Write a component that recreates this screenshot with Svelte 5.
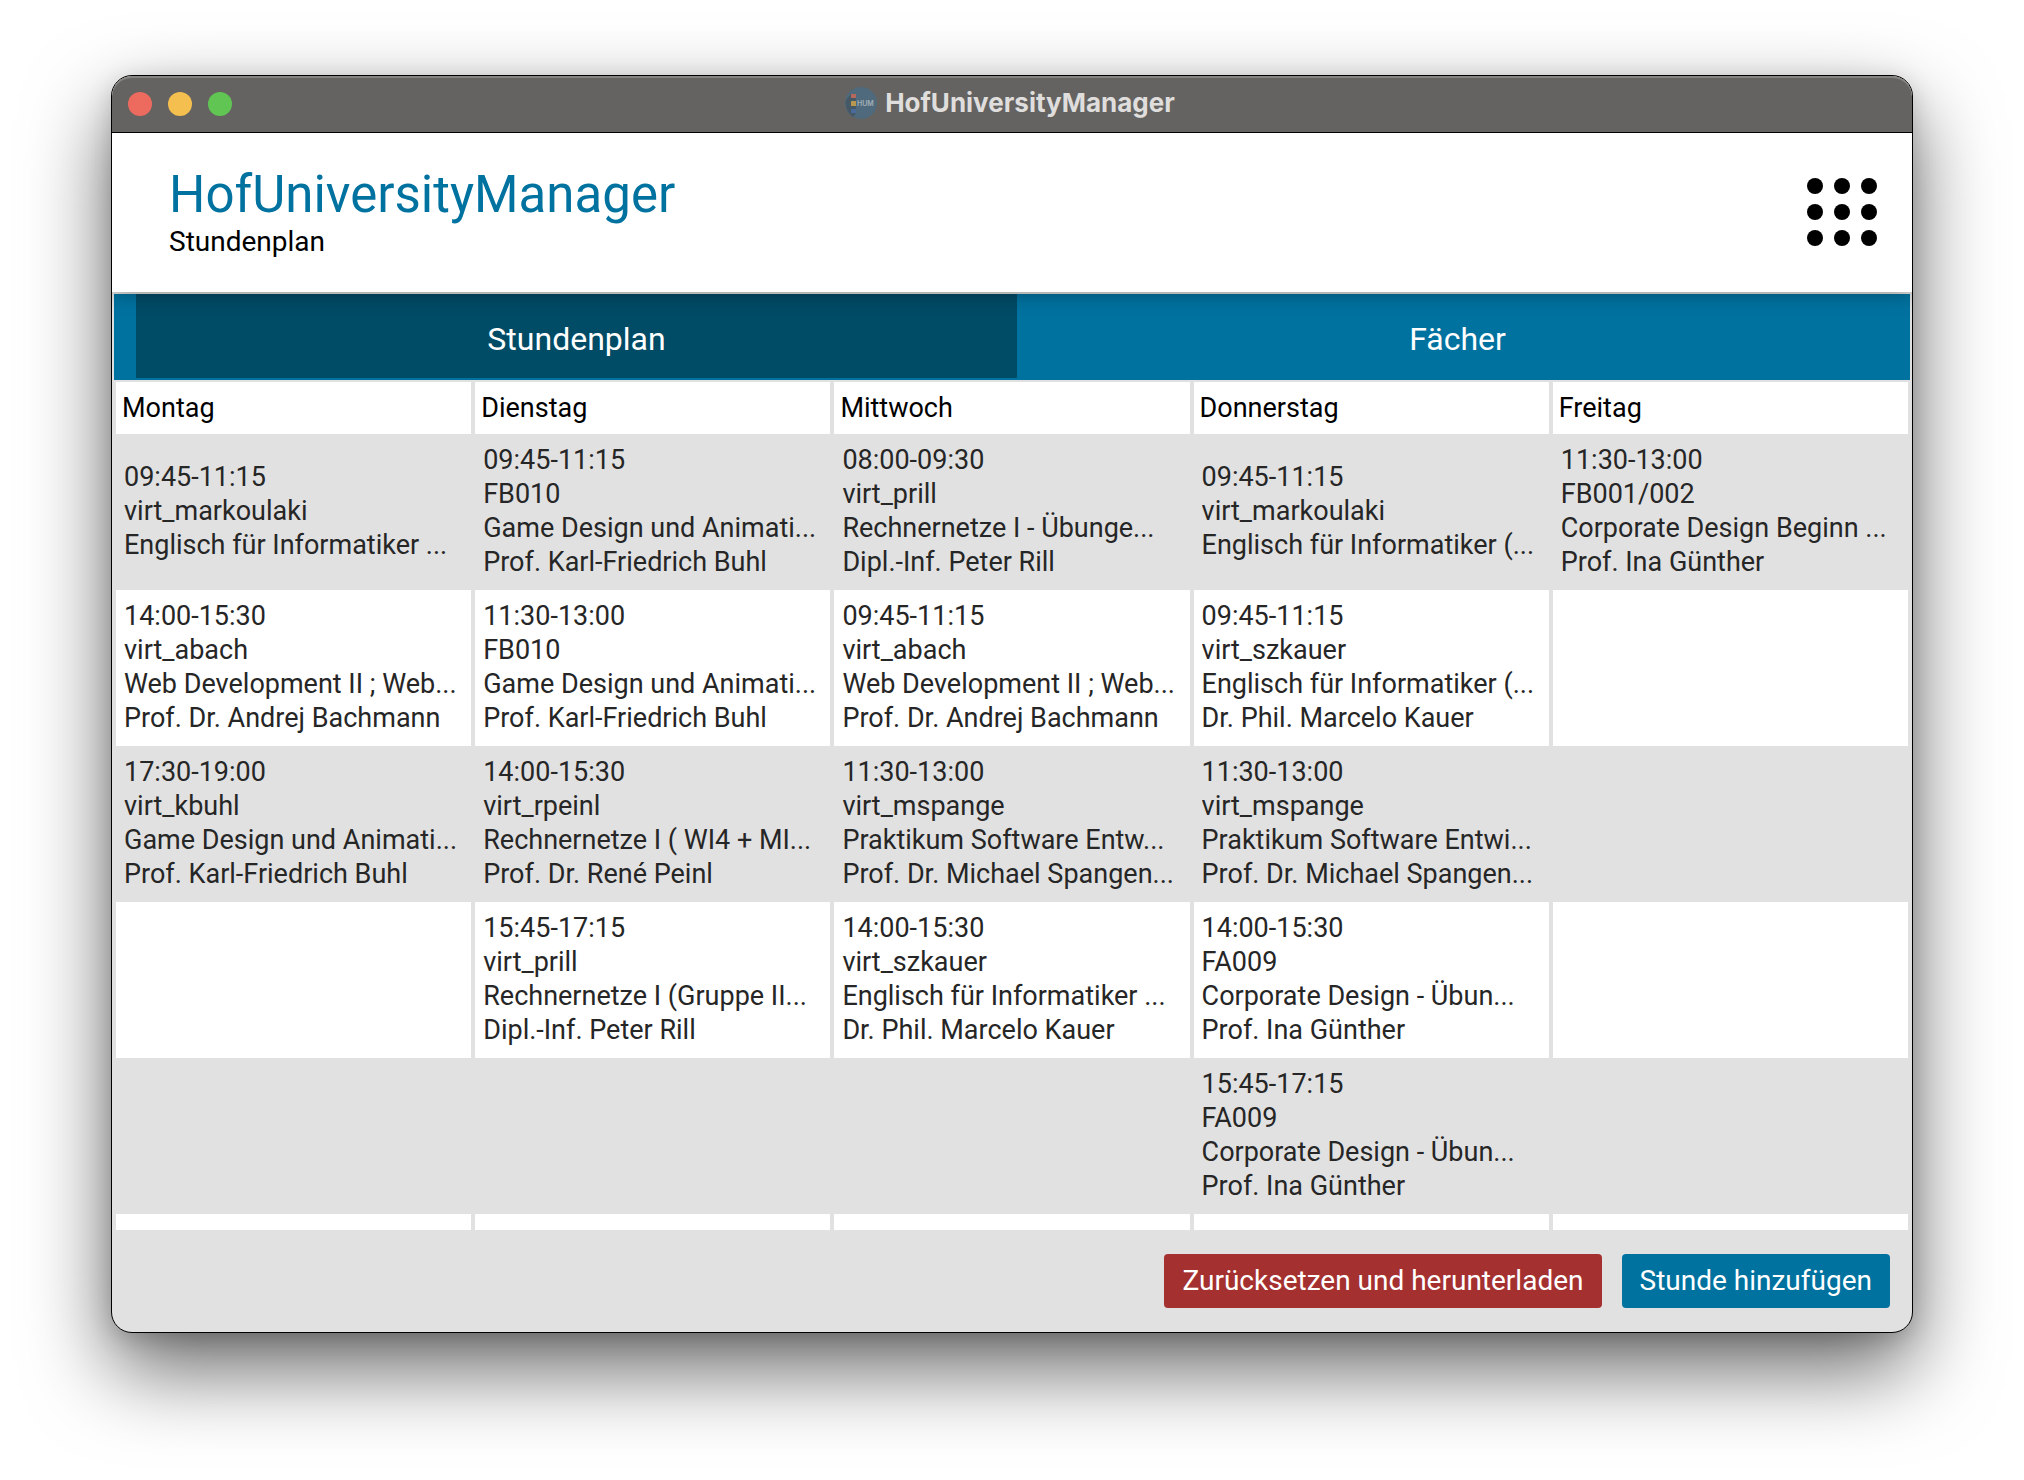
<script>
  const days = ['Montag', 'Dienstag', 'Mittwoch', 'Donnerstag', 'Freitag'];

  const rows = [
    [
      ['09:45-11:15', 'virt_markoulaki', 'Englisch für Informatiker ...'],
      ['09:45-11:15', 'FB010', 'Game Design und Animati...', 'Prof. Karl-Friedrich Buhl'],
      ['08:00-09:30', 'virt_prill', 'Rechnernetze I - Übunge...', 'Dipl.-Inf. Peter Rill'],
      ['09:45-11:15', 'virt_markoulaki', 'Englisch für Informatiker (...'],
      ['11:30-13:00', 'FB001/002', 'Corporate Design Beginn ...', 'Prof. Ina Günther']
    ],
    [
      ['14:00-15:30', 'virt_abach', 'Web Development II ; Web...', 'Prof. Dr. Andrej Bachmann'],
      ['11:30-13:00', 'FB010', 'Game Design und Animati...', 'Prof. Karl-Friedrich Buhl'],
      ['09:45-11:15', 'virt_abach', 'Web Development II ; Web...', 'Prof. Dr. Andrej Bachmann'],
      ['09:45-11:15', 'virt_szkauer', 'Englisch für Informatiker (...', 'Dr. Phil. Marcelo Kauer'],
      []
    ],
    [
      ['17:30-19:00', 'virt_kbuhl', 'Game Design und Animati...', 'Prof. Karl-Friedrich Buhl'],
      ['14:00-15:30', 'virt_rpeinl', 'Rechnernetze I ( WI4 + MI...', 'Prof. Dr. René Peinl'],
      ['11:30-13:00', 'virt_mspange', 'Praktikum Software Entw...', 'Prof. Dr. Michael Spangen...'],
      ['11:30-13:00', 'virt_mspange', 'Praktikum Software Entwi...', 'Prof. Dr. Michael Spangen...'],
      []
    ],
    [
      [],
      ['15:45-17:15', 'virt_prill', 'Rechnernetze I (Gruppe II...', 'Dipl.-Inf. Peter Rill'],
      ['14:00-15:30', 'virt_szkauer', 'Englisch für Informatiker ...', 'Dr. Phil. Marcelo Kauer'],
      ['14:00-15:30', 'FA009', 'Corporate Design - Übun...', 'Prof. Ina Günther'],
      []
    ],
    [[], [], [], ['15:45-17:15', 'FA009', 'Corporate Design - Übun...', 'Prof. Ina Günther'], []]
  ];

  let active = $state('Stundenplan');
</script>

<main class="window">
  <div class="titlebar">
    <div class="lights">
      <button class="light close" aria-label="Schließen"></button>
      <button class="light minimize" aria-label="Minimieren"></button>
      <button class="light zoom" aria-label="Vergrößern"></button>
    </div>
    <div class="caption">
      <svg class="logo" viewBox="0 0 32 32" aria-hidden="true">
        <circle cx="16" cy="16" r="16" fill="#4f6a7c" />
        <path d="M6 7 L1 13 Q-1 23 8 30 L11 26 V7Z" fill="#455865" />
        <rect x="6" y="7" width="5" height="4" fill="#b5695c" />
        <rect x="6" y="14" width="5" height="5" fill="#b8984f" />
        <rect x="6" y="22" width="5" height="4" fill="#496a9a" />
        <text x="12" y="19" font-size="7" font-weight="600" fill="#a3b0b7">HUM</text>
      </svg>
      <span>HofUniversityManager</span>
    </div>
  </div>

  <header class="header">
    <div>
      <h1>HofUniversityManager</h1>
      <p>Stundenplan</p>
    </div>
    <button class="menu" aria-label="Menü">
      <svg viewBox="0 0 70 68" aria-hidden="true">
        {#each [8, 34, 60] as cy}
          {#each [8, 35, 62] as cx}
            <circle {cx} {cy} r="8" />
          {/each}
        {/each}
      </svg>
    </button>
  </header>

  <nav class="tabs">
    {#each ['Stundenplan', 'Fächer'] as tab}
      <button class="tab" class:active={active === tab} onclick={() => (active = tab)}>{tab}</button>
    {/each}
  </nav>

  <table>
    <thead>
      <tr>
        {#each days as day}
          <th scope="col">{day}</th>
        {/each}
      </tr>
    </thead>
    <tbody>
      {#each rows as row}
        <tr>
          {#each row as lesson}
            <td>
              {#each lesson as line}
                <div class="line">{line}</div>
              {/each}
            </td>
          {/each}
        </tr>
      {/each}
      <tr class="rest">
        {#each days as _}
          <td></td>
        {/each}
      </tr>
    </tbody>
  </table>

  <footer>
    <button class="action danger">Zurücksetzen und herunterladen</button>
    <button class="action primary">Stunde hinzufügen</button>
  </footer>
</main>

<style>
  :global(body) {
    background: #fff;
  }

  :global(#app) {
    display: flow-root;
  }

  .window {
    margin: 75px 111px 147px;
    border: 1px solid #000;
    border-radius: 21px;
    overflow: hidden;
    background: #e1e1e1;
    box-shadow:
      0 36px 84px rgba(0, 0, 0, 0.6),
      0 6px 24px rgba(0, 0, 0, 0.16);
    font-family: Roboto, "Liberation Sans", sans-serif;
    font-size: 27px;
    line-height: 34px;
    color: #262626;
  }

  button {
    border: 0;
    padding: 0;
    font: inherit;
    cursor: pointer;
  }

  .titlebar {
    position: relative;
    z-index: 2;
    display: grid;
    grid-template-columns: 1fr auto 1fr;
    align-items: center;
    height: 56px;
    padding: 0 20px 0 16px;
    background: #646361;
    border-bottom: 1px solid #000;
    border-radius: 20px 20px 0 0;
    box-shadow: inset 0 2px 0 #858481;
  }

  .lights {
    display: flex;
    gap: 16px;
  }

  .light {
    width: 24px;
    height: 24px;
    border-radius: 50%;
  }

  .close {
    background: #ed6a5e;
  }

  .minimize {
    background: #f5bf4f;
  }

  .zoom {
    background: #61c554;
  }

  .caption {
    display: flex;
    align-items: center;
    gap: 8px;
    padding-bottom: 2px;
    font-family: Inter, sans-serif;
    font-size: 26px;
    font-weight: 700;
    color: #dfdedd;
  }

  .logo {
    width: 32px;
    height: 32px;
  }

  .header {
    position: relative;
    z-index: 1;
    display: flex;
    justify-content: space-between;
    align-items: center;
    height: 159px;
    padding: 0 35px 2px 57px;
    box-sizing: border-box;
    background: #fff;
    color: #000;
    box-shadow: 0 0 20px rgba(0, 0, 0, 0.4);
  }

  h1 {
    margin: 0;
    font-size: 51px;
    line-height: 60px;
    font-weight: 400;
    color: #0072a0;
  }

  p {
    margin: 0;
    font-size: 28px;
  }

  .menu {
    background: none;
  }

  .menu svg {
    display: block;
    width: 70px;
    height: 68px;
  }

  .tabs {
    display: flex;
    margin: 2px;
    padding: 0 12px 2px 22px;
    background: #0072a0;
  }

  .tab {
    flex: 1;
    height: 84px;
    padding-top: 5px;
    background: none;
    color: #fff;
    font-size: 32px;
  }

  .tab.active {
    background: #004b66;
  }

  table {
    width: 100%;
    table-layout: fixed;
    border-collapse: separate;
    border-spacing: 4px 0;
  }

  th {
    height: 52px;
    padding: 0 6px;
    background: #fff;
    color: #000;
    font-weight: 400;
    text-align: left;
  }

  td {
    height: 136px;
    padding: 9px 8px 11px;
    vertical-align: middle;
  }

  tr:nth-child(even) td {
    background: #fff;
  }

  .rest td {
    height: 16px;
    padding: 0;
  }

  .line {
    overflow: hidden;
    white-space: nowrap;
  }

  footer {
    display: flex;
    justify-content: flex-end;
    gap: 20px;
    padding: 24px 22px;
  }

  .action {
    height: 54px;
    padding: 0 18px;
    border-radius: 4px;
    color: #fff;
    font-size: 28px;
  }

  .danger {
    background: #a53030;
  }

  .primary {
    background: #0072a0;
  }
</style>
